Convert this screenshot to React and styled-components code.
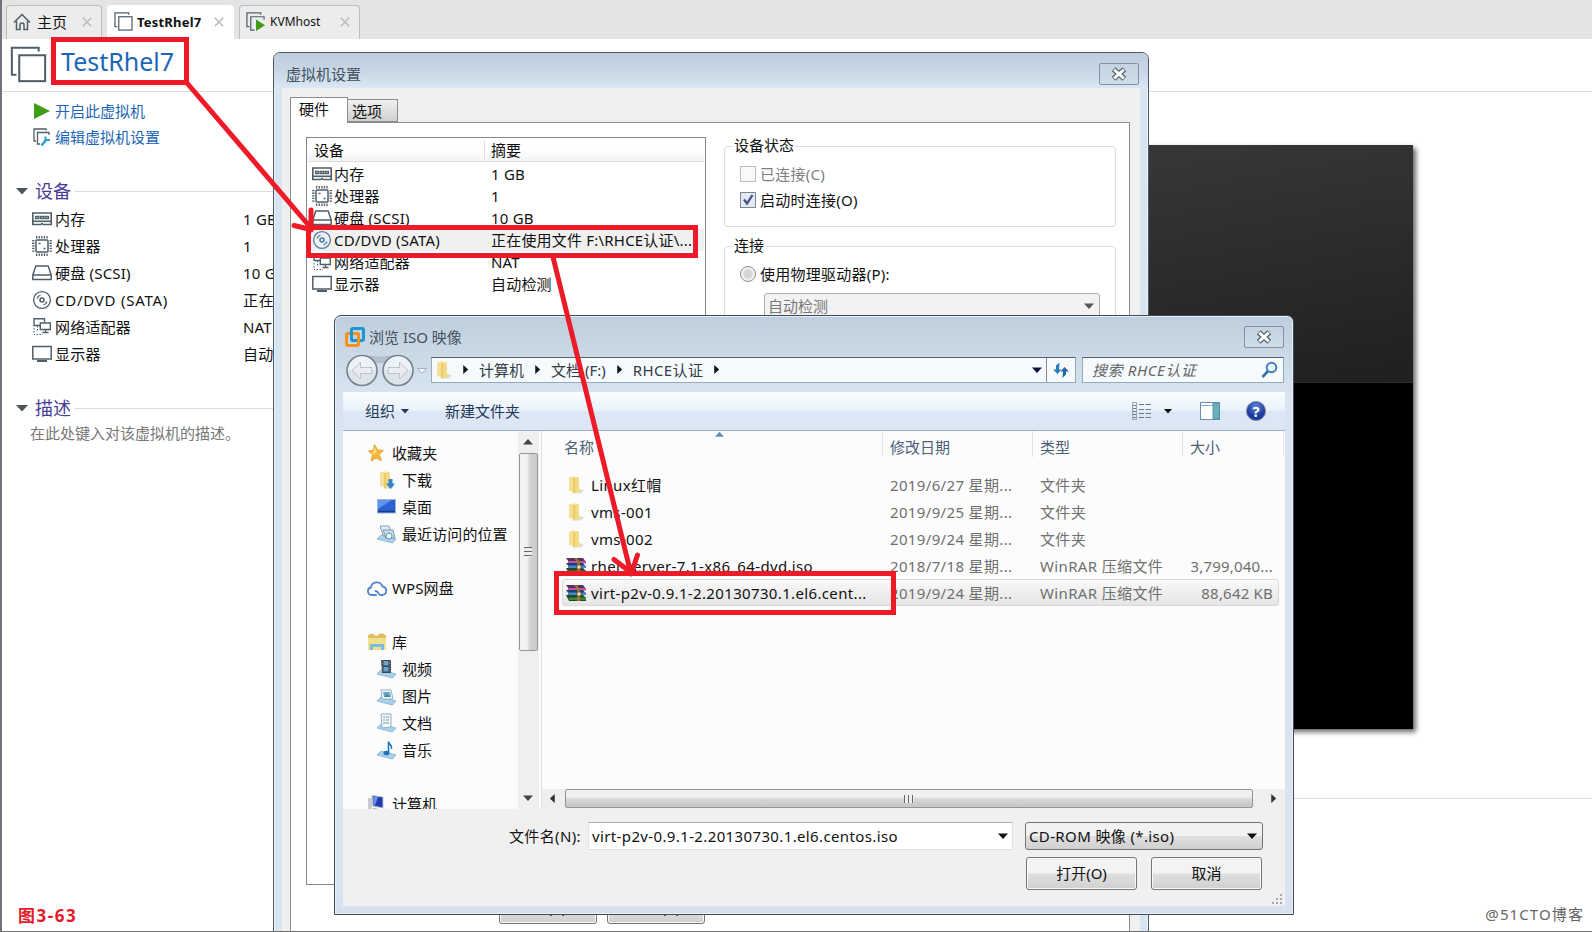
import React, { useState } from 'react'
import styled, { createGlobalStyle, css } from 'styled-components'

const ink = '#4f5f69'

const HomeIcon = () => (
  <svg width="18" height="18" viewBox="0 0 18 18" fill="none" stroke={ink} strokeWidth="1.5">
    <path d="M1 9.5 9 1.5l8 8" />
    <path d="M3.5 8v8.500h3.500v-4.500a2 2 0 0 1 4 0v4.500h3.500V8" />
  </svg>
)

const VmIcon = ({ size = 20, running, wide }) => (
  <svg width={size} height={size} viewBox="0 0 20 20" fill="none" stroke={ink} strokeWidth={wide ? 1.1 : 1.3}>
    <path d="M15.5 3V1H1v14.5h2.5" />
    {running ? <path d="M9 19H5V5h14v3" /> : <rect x="5" y="5" width="14" height="14" fill="#fff" />}
    {running && <path d="M10.500 8v12l9.500-6z" fill="#3f9c17" stroke="none" />}
  </svg>
)

const EditIcon = () => (
  <svg width="18" height="19" viewBox="0 0 18 19" fill="none" stroke={ink} strokeWidth="1.3">
    <path d="M13 2.500V1H1v12h2" />
    <path d="M16 7V4.500H4.500V16H7" />
    <path d="m8.500 17.500 5-6" stroke="#2ba0dc" strokeWidth="2.600" />
    <path d="M12.500 8.500v3.500h4.500" stroke="#2ba0dc" strokeWidth="2" />
  </svg>
)

const MemoryIcon = () => (
  <svg width="20" height="20" viewBox="0 0 20 20" fill="none" stroke={ink} strokeWidth="1.6">
    <path d="M.8 4h18.400v11.500h-8l-1.200-1-1.200 1h-8z" />
    <path d="M1 12.300h18" />
    <path d="M3.500 7.300h3.300v2.300H3.500zM8.400 7.300h3.300v2.300H8.400zM13.200 7.300h3.300v2.300h-3.300z" strokeWidth="1.2" fill="#a3adb3" />
  </svg>
)

const CpuIcon = () => (
  <svg width="20" height="20" viewBox="0 0 20 20" fill="none" stroke={ink}>
    <rect x="4" y="4" width="12" height="12" rx="1" strokeWidth="1.5" />
    <path d="M4 1.300h12M4 18.700h12M1.300 4v12M18.700 4v12" strokeWidth="2.400" strokeDasharray="1.300 1.300" />
    <path d="M6.500 7.500h2M11.500 12.500h2" strokeWidth="1.600" />
  </svg>
)

const DiskIcon = () => (
  <svg width="20" height="20" viewBox="0 0 20 20" fill="none" stroke={ink} strokeWidth="1.5" strokeLinejoin="round">
    <path d="M3.800 3h12.400L19.200 12H.8z" />
    <path d="M.8 12v4.500h18.400V12" />
  </svg>
)

const CdIcon = ({ color = ink }) => (
  <svg width="20" height="20" viewBox="0 0 20 20" fill="none" stroke={color} strokeWidth="1.3">
    <circle cx="10" cy="10" r="8.400" />
    <circle cx="10" cy="10" r="2" strokeWidth="1.600" />
    <path d="M5 8.500a5.500 5.500 0 0 1 3.500-3.500M15 11.500a5.500 5.500 0 0 1-3.500 3.500" />
  </svg>
)

const NetworkIcon = () => (
  <svg width="20" height="20" viewBox="0 0 20 20" fill="none" stroke={ink} strokeWidth="1.4">
    <path d="M8 8.500H2V1.700h10.500v3.500" />
    <path d="M8.300 6h10v6.500h-10zM13.500 12.500v3M10.500 15.500h6" />
    <path d="M2 11v6.500h9M5.500 9v5" strokeDasharray="1.500 1.500" strokeWidth="1" />
  </svg>
)

const DisplayIcon = () => (
  <svg width="20" height="20" viewBox="0 0 20 20" fill="none" stroke={ink} strokeWidth="1.5">
    <rect x=".8" y="2.500" width="18.400" height="12.500" />
    <path d="M5 17h10" strokeWidth="2" />
  </svg>
)

const CloseGlyph = () => (
  <svg width="16" height="14" viewBox="0 0 15 13">
    <path d="M2.500 2l10 9M12.500 2l-10 9" stroke="#4d5a66" strokeWidth="5" />
    <path d="M3 2.500l9 8M12 2.500l-9 8" stroke="#fff" strokeWidth="2.800" />
  </svg>
)

const VmwareLogo = () => (
  <svg width="20" height="20" viewBox="0 0 20 20" fill="none" strokeWidth="3">
    <rect x="6.500" y="1.500" width="12" height="12" rx="1.500" stroke="#1e96d2" />
    <rect x="1.500" y="6.500" width="12" height="12" rx="1.500" stroke="#f3921d" />
    <path d="M6.500 9V4M6.500 13.500H10" stroke="#1e96d2" />
  </svg>
)

const FolderIcon = ({ arrow }) => (
  <svg width="18" height="20" viewBox="0 0 18 20">
    <path d="M9 14l8 1-3 3.500H5z" fill="#d9dde0" />
    <path d="M2 2.500 8 1v16.500l-6-1.500z" fill="#f5e09a" />
    <path d="M6 3.500l5-1.500v14L6 18.500z" fill="#eccb68" />
    <path d="M8.500 3 12 2.500V14l3.500 1.500-7.500 3z" fill="#f3dc86" />
    {arrow && <path d="M10.500 9h4v4.500H17L12.500 19 8 13.500h2.500z" fill="#2f86cc" />}
  </svg>
)

const StarIcon = () => (
  <svg width="20" height="20" viewBox="0 0 20 20">
    <path d="m7.500 1.500 3 5.300 5.800.7-4 4 2.200 6.300-5.500-2.800-4.800 3 1.300-6.300L1.500 8l4.800-1z" fill="#fbb63e" stroke="#e9a23d" />
    <path d="m7.800 4 1.500 5-4.300 3z" fill="#ffe08a" />
  </svg>
)

const DesktopIcon = () => (
  <svg width="20" height="20" viewBox="0 0 20 20">
    <rect x=".5" y="2.500" width="18" height="13.500" fill="#2c62cf" stroke="#9fb6d8" />
    <path d="M1 3h14L1 12z" fill="#5c95ed" />
    <path d="M1 14.500h17" stroke="#173c8f" strokeWidth="1.500" />
  </svg>
)

const TrayIcon = ({ children }) => (
  <svg width="20" height="20" viewBox="0 0 20 20">
    <path d="M0 15l4-4 15 4-3.500 4z" fill="#a9d2ec" stroke="#6ea9ce" strokeWidth=".7" />
    {children}
  </svg>
)

const RecentIcon = () => (
  <TrayIcon>
    <path d="M3 2h9l3 9H6z" fill="#dce9ef" stroke="#8aa5b3" />
    <path d="M6 6h10l2 8H9z" fill="#c5dde8" stroke="#7c9aab" />
    <circle cx="12" cy="12" r="3" fill="#f3fafc" stroke="#6391ac" />
  </TrayIcon>
)

const VideoIcon = () => (
  <TrayIcon>
    <path d="M4 1h10v13H5z" fill="#39444d" />
    <path d="M6.500 2h5v4.500h-5zM6.500 8h5v4.500h-5z" fill="#67a6cf" />
    <path d="M5 1.500v12M13 1.500V14" stroke="#aeb9c0" strokeDasharray="1 1.500" />
  </TrayIcon>
)

const PictureIcon = () => (
  <TrayIcon>
    <path d="M4 4h10l2 9H5z" fill="#f3fafd" stroke="#8bb1c8" />
    <path d="M6 6h7l1 5H7z" fill="#6aa7c9" />
    <path d="M7 11l3-3 3.500 3z" fill="#4d8d7d" />
  </TrayIcon>
)

const DocumentIcon = () => (
  <TrayIcon>
    <path d="M4 1h10v13l-9 1z" fill="#f5f9fb" stroke="#90aebf" />
    <path d="M6 4h2M9 4h3M6 7h2M9 7h3M6 10h6" stroke="#6f97ad" />
  </TrayIcon>
)

const MusicIcon = () => (
  <TrayIcon>
    <path d="M11.500 13V1.500c0 3 4.500 3.500 3 7.500" fill="none" stroke="#2075b8" strokeWidth="1.600" />
    <ellipse cx="9.500" cy="13" rx="3" ry="2.300" fill="#2075b8" />
  </TrayIcon>
)

const CloudIcon = () => (
  <svg width="20" height="20" viewBox="0 0 20 20" fill="none" stroke="#5384d8" strokeWidth="1.800">
    <path d="M9 17H4.500a3.800 3.800 0 0 1-.6-7.500 6 6 0 0 1 11.600-1 4.300 4.300 0 0 1 .2 8.500h-2c-3 0-1.500-4-5.200-4" strokeLinecap="round" />
  </svg>
)

const LibraryIcon = () => (
  <svg width="20" height="20" viewBox="0 0 20 20">
    <path d="M1 3.500l3-2 3 1 1 1h3l1-2h4l3 2v14H1z" fill="#dcc05e" />
    <path d="M1 6h18v12H1z" fill="#f3e08c" />
    <path d="M3 18v-6h14v6h-3v-3H6v3z" fill="#78bde0" />
  </svg>
)

const ComputerIcon = () => (
  <svg width="20" height="20" viewBox="0 0 20 20">
    <path d="M1 4h4v11H1z" fill="#c6ccd0" />
    <path d="M5 1.500 16 3v11L6 12z" fill="#1f3bb0" stroke="#b8c3cf" />
    <path d="M6 2.500 11 3l-3 8.500-1.500-.3z" fill="#6e8fe6" />
    <path d="M6 15l9 1.500 3-1" stroke="#98a4ad" strokeWidth="2" fill="none" />
  </svg>
)

const RarIcon = () => (
  <svg width="20" height="18" viewBox="0 0 20 18">
    <path d="M0 1h17l3 4H3z" fill="#54315e" />
    <path d="M2 4h18v2.500H2z" fill="#c0559c" />
    <path d="M0 6h17l3 4H3z" fill="#1f3d7c" />
    <path d="M2 8.500h18V11H2z" fill="#4a86cb" />
    <path d="M0 11h17l3 3v3H3z" fill="#1c4c22" />
    <path d="M3 13.500h17V16H3z" fill="#3e8a3b" />
    <path d="M8 1h3l3 4v12h-3V5z" fill="#9c7440" />
    <path d="M11 8h4v4h-4z" fill="#efe3b4" stroke="#5c4624" strokeWidth=".8" />
  </svg>
)

const NavArrows = () => (
  <svg width="84" height="34" viewBox="0 0 84 34">
    <path d="M17 2c8-.5 10 1.500 18 1.500s10-2 18-1.500v8H17z" fill="#b3bfcc" />
    {[17, 53].map(cx => (
      <g key={cx}>
        <circle cx={cx} cy="17.500" r="15" fill="#dde4ec" stroke="#77828e" strokeWidth="1.600" />
        <path d={`M${cx - 13.500} 17a13.500 13.500 0 0 1 27 0z`} fill="#edf2f7" />
      </g>
    ))}
    <path d="M7 17.500l8.500-8v5H27v6H15.500v5z" fill="#e9edf2" stroke="#b9c2cc" />
    <path d="M63 17.500l-8.500-8v5H43v6h11.500v5z" fill="#e9edf2" stroke="#b9c2cc" />
    <path d="M72.500 15.500h9l-4.500 5z" fill="#f3f6fa" stroke="#a2b0c0" />
  </svg>
)

const RefreshIcon = () => (
  <svg width="18" height="18" viewBox="0 0 18 18" fill="#2b7ec0">
    <path d="M4 4.500 7.500 1.500 7 8.500H9.500L5.500 13 1 8.500h3z" />
    <path d="M14 13.500 10.500 17l.5-6.500H8.500L12.500 6 17 10.500h-3z" fill="#2467a4" />
  </svg>
)

const SearchIcon = () => (
  <svg width="17" height="18" viewBox="0 0 17 18" fill="none">
    <path d="M1.500 16l5.500-6" stroke="#3b6ea3" strokeWidth="2.600" />
    <circle cx="10.500" cy="6.500" r="4.800" fill="#eef6fd" stroke="#3f7fbd" strokeWidth="2" />
  </svg>
)

const ViewIcon = () => (
  <svg width="20" height="18" viewBox="0 0 20 18" stroke="#6b7b8d" fill="none">
    <path d="M1.500.500h4v17h-4z" stroke="#98a7b8" />
    <path d="M2 3.500h3M2 6.500h3M2 9.500h3M2 12.500h3M2 15.500h3" />
    <path d="M8 2.500h5M14.500 2.500H20M8 7.500h5M14.500 7.500H20M8 11.500h5M14.500 11.500H20M8 15.500h5M14.500 15.500H20" />
  </svg>
)

const PaneIcon = () => (
  <svg width="20" height="18" viewBox="0 0 20 18">
    <rect x=".5" y=".5" width="19" height="17" fill="#fff" stroke="#6b8fb5" />
    <path d="M1 3.500h12" stroke="#8ea9c6" />
    <rect x="13" y="1" width="6.500" height="16" fill="#69b0bd" stroke="#4c8b9c" strokeWidth=".8" />
  </svg>
)

const Triangle = ({ dir = 'down', size = 5, color = '#111' }) => {
  const turn = { down: 0, left: 90, up: 180, right: 270 }[dir]
  return (
    <svg width={size * 2} height={size * 2} viewBox="0 0 10 10">
      <path d="M0 2.500h10L5 8z" fill={color} transform={`rotate(${turn} 5 5)`} />
    </svg>
  )
}

const TabClose = () => (
  <svg width="10" height="10" viewBox="0 0 10 10" stroke="#bdbdbd" strokeWidth="1.600">
    <path d="M.8.8l8.400 8.400M9.200.8.8 9.200" />
  </svg>
)

const devices = [
  { name: '内存', value: '1 GB', Icon: MemoryIcon },
  { name: '处理器', value: '1', Icon: CpuIcon },
  { name: '硬盘 (SCSI)', value: '10 GB', Icon: DiskIcon },
  { name: 'CD/DVD (SATA)', value: '正在使用文件 F:\\RHCE认证\\...', Icon: CdIcon },
  { name: '网络适配器', value: 'NAT', Icon: NetworkIcon },
  { name: '显示器', value: '自动检测', Icon: DisplayIcon },
]

const places = [
  { name: '收藏夹', Icon: StarIcon },
  { name: '下载', Icon: () => <FolderIcon arrow />, sub: true },
  { name: '桌面', Icon: DesktopIcon, sub: true },
  { name: '最近访问的位置', Icon: RecentIcon, sub: true },
  null,
  { name: 'WPS网盘', Icon: CloudIcon },
  null,
  { name: '库', Icon: LibraryIcon },
  { name: '视频', Icon: VideoIcon, sub: true },
  { name: '图片', Icon: PictureIcon, sub: true },
  { name: '文档', Icon: DocumentIcon, sub: true },
  { name: '音乐', Icon: MusicIcon, sub: true },
  null,
  { name: '计算机', Icon: ComputerIcon },
]

const files = [
  { name: 'Linux红帽', date: '2019/6/27 星期...', type: '文件夹', size: '' },
  { name: 'vms-001', date: '2019/9/25 星期...', type: '文件夹', size: '' },
  { name: 'vms-002', date: '2019/9/24 星期...', type: '文件夹', size: '' },
  { name: 'rhel-server-7.1-x86_64-dvd.iso', date: '2018/7/18 星期...', type: 'WinRAR 压缩文件', size: '3,799,040...', rar: true },
  { name: 'virt-p2v-0.9.1-2.20130730.1.el6.cent...', date: '2019/9/24 星期...', type: 'WinRAR 压缩文件', size: '88,642 KB', rar: true },
]

const BrowseDialog = () => {
  const [selected, setSelected] = useState(4)

  return (
    <BrowseWindow>
      <BrowseTitle>
        <VmwareLogo />
        <span>浏览 ISO 映像</span>
        <CloseButton>
          <CloseGlyph />
        </CloseButton>
      </BrowseTitle>
      <NavRow>
        <NavArrows />
        <AddressBar>
          <FolderIcon />
          <Crumbs>
            <Triangle dir="right" size={4.5} />
            <span>计算机</span>
            <Triangle dir="right" size={4.5} />
            <span>文档 (F:)</span>
            <Triangle dir="right" size={4.5} />
            <span>RHCE认证</span>
            <Triangle dir="right" size={4.5} />
          </Crumbs>
          <Triangle color="#0c1240" />
          <Refresh>
            <RefreshIcon />
          </Refresh>
        </AddressBar>
        <SearchBox>
          <em>搜索 RHCE认证</em>
          <SearchIcon />
        </SearchBox>
      </NavRow>
      <Toolbar>
        <ToolText>
          组织 <Triangle size={4} color="#1e395b" />
        </ToolText>
        <ToolText>新建文件夹</ToolText>
        <ToolIcons>
          <ViewIcon />
          <Triangle size={4} />
          <PaneIcon />
          <Help>?</Help>
        </ToolIcons>
      </Toolbar>
      <Browser>
        <Places>
          {places.map((p, i) =>
            p ? (
              <Place key={i} $sub={p.sub}>
                <p.Icon />
                {p.name}
              </Place>
            ) : (
              <Place key={i} />
            )
          )}
        </Places>
        <VScroll>
          <Triangle dir="up" color="#444" />
          <VThumb>
            <VGrip />
          </VThumb>
          <Triangle color="#444" />
        </VScroll>
        <FilePane>
          <FileHead>
            <HeadCell>名称</HeadCell>
            <HeadCell>修改日期</HeadCell>
            <HeadCell>类型</HeadCell>
            <HeadCell>大小</HeadCell>
            <SortMark>
              <Triangle dir="up" size={4.5} color="#5f8fb4" />
            </SortMark>
          </FileHead>
          <FileRows>
            {files.map((f, i) => (
              <FileRow key={f.name} $selected={i === selected} onClick={() => setSelected(i)}>
                <FileName>
                  {f.rar ? <RarIcon /> : <FolderIcon />}
                  <span>{f.name}</span>
                </FileName>
                <span>{f.date}</span>
                <span>{f.type}</span>
                <FileSize>{f.size}</FileSize>
              </FileRow>
            ))}
          </FileRows>
          <HScroll>
            <Triangle dir="left" size={4.5} color="#333" />
            <HThumb>
              <HGrip />
            </HThumb>
            <Triangle dir="right" size={4.5} color="#333" />
          </HScroll>
        </FilePane>
      </Browser>
      <Footer>
        <FooterRow>
          <label>文件名(N):</label>
          <NameBox>
            virt-p2v-0.9.1-2.20130730.1.el6.centos.iso
            <Triangle />
          </NameBox>
          <TypeBox>
            CD-ROM 映像 (*.iso)
            <Triangle />
          </TypeBox>
        </FooterRow>
        <ButtonRow>
          <Button>打开(O)</Button>
          <Button>取消</Button>
        </ButtonRow>
        <Sizer>
          <svg width="12" height="12" viewBox="0 0 12 12" fill="#a8a8a8">
            <path d="M9 1h2v2H9zM5 5h2v2H5zM9 5h2v2H9zM1 9h2v2H1zM5 9h2v2H5zM9 9h2v2H9z" />
          </svg>
        </Sizer>
      </Footer>
    </BrowseWindow>
  )
}

const SettingsDialog = () => (
  <SettingsWindow>
    <SettingsTitle>
      <span>虚拟机设置</span>
      <CloseButton>
        <CloseGlyph />
      </CloseButton>
    </SettingsTitle>
    <SettingsBody>
      <SheetTabs>
        <SheetTab $active>硬件</SheetTab>
        <SheetTab>选项</SheetTab>
      </SheetTabs>
      <Sheet>
        <HardwareColumn>
          <HardwareList>
            <HardwareHead>
              <span>设备</span>
              <span>摘要</span>
            </HardwareHead>
            {devices.map(({ name, value, Icon }, i) => (
              <HardwareRow key={name} $selected={i === 3}>
                <Icon color={i === 3 ? '#4a7da8' : undefined} />
                <span>{name}</span>
                <span>{value}</span>
              </HardwareRow>
            ))}
          </HardwareList>
          <HardwareButtons>
            <Button>添加(A)...</Button>
            <Button>移除(R)</Button>
          </HardwareButtons>
        </HardwareColumn>
        <Options>
          <Group $height={81}>
            <legend>设备状态</legend>
            <Check $disabled>
              <Box $disabled />
              已连接(C)
            </Check>
            <Check>
              <Box>
                <svg width="12" height="12" viewBox="0 0 12 12" fill="none">
                  <path d="M2 5.500 5 9.500 10.500 1" stroke="#41508c" strokeWidth="2.200" />
                </svg>
              </Box>
              启动时连接(O)
            </Check>
          </Group>
          <Group $height={240}>
            <legend>连接</legend>
            <Check>
              <Radio />
              使用物理驱动器(P):
            </Check>
            <DriveSelect>
              自动检测
              <Triangle color="#555" />
            </DriveSelect>
          </Group>
        </Options>
      </Sheet>
    </SettingsBody>
  </SettingsWindow>
)

const App = () => (
  <Desktop>
    <GlobalStyle />
    <TabBar>
      <Tab $width={96} $gap={6}>
        <HomeIcon />
        <span>主页</span>
        <TabClose />
      </Tab>
      <Tab $width={127} $gap={4} $active>
        <VmIcon size={19} />
        <b>TestRhel7</b>
        <TabClose />
      </Tab>
      <Tab $width={121} $gap={5}>
        <VmIcon size={19} running />
        <small>KVMhost</small>
        <TabClose />
      </Tab>
    </TabBar>
    <Header>
      <VmIcon size={37} wide />
      <h1>TestRhel7</h1>
    </Header>
    <Main>
      <Side>
        <Action>
          <svg width="17" height="16" viewBox="0 0 17 16">
            <path d="M1 0v16l16-8z" fill="#3f9c17" />
          </svg>
          <span>开启此虚拟机</span>
        </Action>
        <Action>
          <EditIcon />
          编辑虚拟机设置
        </Action>
        <Section $top={28}>
          <Triangle size={6} color="#4c545c" />
          <h2>设备</h2>
        </Section>
        <DeviceRows>
          {devices.map(({ name, value, Icon }) => (
            <DeviceRow key={name} $loose={name.startsWith('CD')}>
              <Icon />
              <span>{name}</span>
              <span>{value}</span>
            </DeviceRow>
          ))}
        </DeviceRows>
        <Section $top={28}>
          <Triangle size={6} color="#4c545c" />
          <h2>描述</h2>
        </Section>
        <Note>在此处键入对该虚拟机的描述。</Note>
        <Figure>图3-63</Figure>
      </Side>
      <Preview>
        <Screen>
          <Gloss />
        </Screen>
        <Rule />
        <Mark>@51CTO博客</Mark>
      </Preview>
    </Main>
    <SettingsDialog />
    <BrowseDialog />
    <Annotations viewBox="0 0 1592 932">
      <rect x="53.500" y="39.500" width="133" height="43" />
      <rect x="308.500" y="227.500" width="387" height="28" />
      <rect x="556.500" y="573.500" width="337" height="39" />
      <path d="M187 83 311 228M311 210v20M294 225.500l17 4" />
      <path d="M553 257 631 574M614 559.500l17 13M637.500 555l-6 18" />
    </Annotations>
  </Desktop>
)

const GlobalStyle = createGlobalStyle`
  * {
    box-sizing: border-box;
  }
  body {
    margin: 0;
    background: #fff;
  }
  svg {
    flex: none;
    display: block;
  }
  h1, h2 {
    margin: 0;
    font-weight: 400;
  }
`

const Desktop = styled.div`
  position: relative;
  width: 1592px;
  height: 932px;
  overflow: hidden;
  display: flex;
  flex-direction: column;
  background: #fff;
  border-left: 2px solid #6f757b;
  border-bottom: 1px solid #6f6f6f;
  font-family: 'Noto Sans', 'Noto Sans CJK SC', sans-serif;
  font-size: 15px;
  line-height: 20px;
  color: #111;
  white-space: nowrap;
`

const TabBar = styled.div`
  height: 39px;
  flex: none;
  background: #e4e4e4;
  display: flex;
  align-items: flex-end;
  gap: 5px;
  padding-left: 4px;
`

const Tab = styled.div`
  width: ${({ $width }) => $width}px;
  height: 34px;
  display: flex;
  align-items: center;
  padding: 0 9px 2px 6px;
  gap: ${({ $gap }) => $gap}px;
  border: 1px solid ${({ $active }) => ($active ? '#fff' : '#bdbdbd')};
  border-bottom: 0;
  border-radius: 4px 4px 0 0;
  background: ${({ $active }) => ($active ? '#fff' : '#ececec')};

  b {
    font-size: 13px;
    letter-spacing: 0.2px;
  }
  small {
    font-size: 12px;
  }
  svg:last-child {
    margin-left: auto;
  }
`

const Header = styled.div`
  height: 53px;
  flex: none;
  display: flex;
  align-items: center;
  gap: 14px;
  padding: 0 0 1px 8px;
  border-bottom: 1px solid #dcdcdc;

  h1 {
    font-size: 25px;
    line-height: 40px;
    color: #1c66b8;
    padding-bottom: 8px;
  }
`

const Main = styled.div`
  flex: 1;
  display: flex;
`

const Side = styled.div`
  width: 836px;
  padding-top: 6px;
  display: flex;
  flex-direction: column;
`

const Action = styled.div`
  height: 26px;
  display: flex;
  align-items: center;
  gap: 4px;
  padding-left: 31px;
  color: #1c66b8;

  span {
    margin-left: 1px;
  }
`

const Section = styled.div`
  height: 26px;
  margin-top: ${({ $top }) => $top}px;
  padding-left: 14px;
  display: flex;
  align-items: center;

  h2 {
    margin-left: 7px;
    font-size: 18px;
    color: #483b96;
  }
  &::after {
    content: '';
    flex: 1;
    margin-left: 4px;
    border-top: 1px solid #dcdcdc;
  }
`

const DeviceRows = styled.div`
  padding: 1px 0 0 30px;
`

const DeviceRow = styled.div`
  height: 27px;
  display: grid;
  grid-template-columns: 23px 188px 1fr;
  align-items: center;
  letter-spacing: ${({ $loose }) => ($loose ? 0.75 : 0.2)}px;
`

const Note = styled.div`
  padding: 2px 0 0 28px;
  color: #777;
`

const Figure = styled.div`
  margin: auto 0 5px 16px;
  font-size: 17px;
  font-weight: 700;
  letter-spacing: 1.5px;
  color: #e6192a;
`

const Preview = styled.div`
  flex: 1;
  display: flex;
  flex-direction: column;
  padding-top: 53px;
`

const Screen = styled.div`
  width: 575px;
  height: 584px;
  background: #000;
  box-shadow: 3px 3px 5px rgba(0, 0, 0, 0.6);
`

const Gloss = styled.div`
  height: 238px;
  background: linear-gradient(170deg, #3c3c3c, #1f1f1f);
  border-bottom: 1px solid #2c2c2c;
`

const Rule = styled.div`
  margin-top: 69px;
  border-top: 1px solid #dcdcdc;
`

const Mark = styled.div`
  margin: auto 8px 7px auto;
  font-size: 15px;
  letter-spacing: 1.1px;
  color: #666;
`

const SettingsWindow = styled.div`
  position: absolute;
  left: 271px;
  top: 52px;
  width: 876px;
  height: 890px;
  display: flex;
  flex-direction: column;
  border: 1px solid #4b5a68;
  border-radius: 7px 7px 0 0;
  background: #d8e5f1;
  box-shadow: inset 0 0 0 1px #e8f0f8;
`

const SettingsTitle = styled.div`
  height: 35px;
  flex: none;
  display: flex;
  align-items: center;
  padding: 6px 9px 0 12px;
  background: linear-gradient(#bfcedc, #c6d4e3 45%, #dae7f4);
  border-radius: 6px 6px 0 0;
  color: #44525f;

  span {
    flex: 1;
  }
`

const CloseButton = styled.button`
  width: 40px;
  height: 22px;
  margin: 0 0 0 auto;
  padding: 0;
  display: flex;
  align-items: center;
  justify-content: center;
  background: linear-gradient(#c5d3e1, #cfdce9);
  border: 1px solid #8194a7;
  border-radius: 2px;
`

const SettingsBody = styled.div`
  flex: 1;
  margin: 0 8px;
  padding: 9px 10px 0 8px;
  display: flex;
  flex-direction: column;
  background: #f0f0f0;
`

const SheetTabs = styled.div`
  height: 25px;
  display: flex;
  align-items: flex-end;
  z-index: 1;
`

const SheetTab = styled.div`
  height: 23px;
  width: 50px;
  padding: 1px 0 0 4px;
  border: 1px solid #8c8c8c;
  border-left: 0;
  background: linear-gradient(#f1f1f1, #cfcfcf);

  ${({ $active }) =>
    $active &&
    css`
      height: 26px;
      width: 58px;
      margin-bottom: -1px;
      padding: 1px 0 0 8px;
      border-left: 1px solid #8c8c8c;
      border-bottom: 0;
      background: #fff;
    `}
`

const Sheet = styled.div`
  flex: 1;
  display: flex;
  padding: 14px 13px 0 15px;
  background: #fff;
  border: 1px solid #8c8c8c;
  border-bottom: 0;
`

const HardwareColumn = styled.div`
  width: 400px;
  margin-right: 18px;
`

const HardwareList = styled.div`
  height: 748px;
  border: 1px solid #828790;
  padding: 1px;
`

const HardwareHead = styled.div`
  height: 23px;
  margin-bottom: 1px;
  display: flex;
  align-items: center;
  background: linear-gradient(#fff 50%, #f2f3f4);
  border-bottom: 1px solid #dcdcdc;

  span {
    width: 176px;
    padding-left: 6px;
  }
  span + span {
    border-left: 1px solid #dedfe1;
    width: 214px;
  }
`

const HardwareRow = styled.div`
  height: 22px;
  display: grid;
  grid-template-columns: 22px 157px 1fr;
  align-items: center;
  padding-left: 4px;
  letter-spacing: 0.2px;
  background: ${({ $selected }) => ($selected ? '#f0f0f0' : 'none')};
`

const HardwareButtons = styled.div`
  display: flex;
  justify-content: flex-end;
  gap: 10px;
  padding: 6px 1px 0 0;

  button {
    width: 98px;
  }
`

const Button = styled.button`
  width: 111px;
  height: 33px;
  padding: 0 0 2px;
  font: inherit;
  color: #111;
  background: linear-gradient(#f3f3f3 48%, #dfdfdf 52%, #d0d0d0);
  border: 1px solid #757575;
  border-radius: 3px;
  box-shadow: inset 0 0 0 1px #fafafa;
`

const Options = styled.div`
  flex: 1;
  padding-top: 9px;
`

const Group = styled.div`
  height: ${({ $height }) => $height}px;
  margin-bottom: 19px;
  padding: 0 15px;
  border: 1px solid #dcdcdc;
  border-radius: 4px;

  legend {
    width: max-content;
    height: 20px;
    margin: -12px 0 6px -7px;
    padding: 0 1px;
    background: #fff;
  }
`

const Check = styled.div`
  height: 26px;
  display: flex;
  align-items: center;
  gap: 4px;
  letter-spacing: 0.25px;
  color: ${({ $disabled }) => ($disabled ? '#808080' : '#111')};
`

const Box = styled.span`
  width: 16px;
  height: 16px;
  display: flex;
  align-items: center;
  justify-content: center;
  border: 1px solid ${({ $disabled }) => ($disabled ? '#bcbcbc' : '#7e8a98')};
  background: ${({ $disabled }) => ($disabled ? '#f9f9f9' : '#e3e8f1')};
`

const Radio = styled.span`
  width: 16px;
  height: 16px;
  border: 1px solid #8a8a8a;
  border-radius: 50%;
  background: radial-gradient(#d6d6d6 40%, #f4f4f4 60%);
`

const DriveSelect = styled.div`
  width: 336px;
  height: 26px;
  margin: 6px 0 0 24px;
  padding: 0 5px 0 3px;
  display: flex;
  align-items: center;
  justify-content: space-between;
  background: #f2f2f2;
  border: 1px solid #adadad;
  border-radius: 3px;
  color: #777;
`

const BrowseWindow = styled.div`
  position: absolute;
  left: 332px;
  top: 315px;
  width: 960px;
  height: 600px;
  display: flex;
  flex-direction: column;
  padding-bottom: 8px;
  border: 1px solid #414c58;
  border-radius: 7px 7px 0 0;
  background: linear-gradient(#bfcedc, #d8e5f1 80px, #d8e5f1 570px, #d7e0f0);
  box-shadow: inset 0 0 0 1px #e6eef6;
`

const BrowseTitle = styled.div`
  height: 36px;
  flex: none;
  display: flex;
  align-items: center;
  gap: 4px;
  padding: 6px 9px 0 10px;
  color: #44525f;
`

const NavRow = styled.div`
  height: 40px;
  flex: none;
  display: flex;
  align-items: center;
  padding: 0 9px 4px 10px;
`

const field = css`
  height: 26px;
  display: flex;
  align-items: center;
  background: #f6fafd;
  border: 1px solid #9aa9b8;
  border-top-color: #55626f;
`

const AddressBar = styled.div`
  ${field}
  width: 645px;
  margin: 0 6px 0 2px;
  padding: 0 0 1px 3px;
`

const Crumbs = styled.div`
  flex: 1;
  display: flex;
  align-items: center;
  padding-left: 8px;
  color: #333c46;

  span {
    margin: 0 9px;
  }
  span:last-of-type {
    letter-spacing: 0.4px;
  }
`

const Refresh = styled.div`
  width: 29px;
  height: 24px;
  margin-left: 4px;
  display: flex;
  align-items: center;
  justify-content: center;
  border-left: 1px solid #7f8c99;
`

const SearchBox = styled.div`
  ${field}
  flex: 1;
  justify-content: space-between;
  padding: 0 5px 1px 9px;
  color: #666;
  letter-spacing: 0.6px;
`

const Toolbar = styled.div`
  height: 39px;
  flex: none;
  margin: 0 8px;
  padding: 0 19px 0 22px;
  display: flex;
  align-items: center;
  gap: 36px;
  color: #1e395b;
  background: linear-gradient(#fbfdff, #eaf1fa 48%, #dce6f4 52%, #dde7f4);
  border-bottom: 1px solid #a0afc8;
`

const ToolText = styled.div`
  display: flex;
  align-items: center;
  gap: 6px;
`

const ToolIcons = styled.div`
  margin-left: auto;
  display: flex;
  align-items: center;

  svg + svg {
    margin-left: 13px;
  }
  svg + svg + svg {
    margin: 0 26px 0 28px;
  }
`

const Help = styled.span`
  width: 20px;
  height: 20px;
  border-radius: 50%;
  background: radial-gradient(circle at 50% 25%, #5d86dc, #1b3a9c 60%);
  border: 1px solid #6f7fa8;
  color: #fff;
  font-size: 15px;
  font-weight: 700;
  line-height: 18px;
  text-align: center;
`

const Browser = styled.div`
  height: 378px;
  flex: none;
  margin: 0 8px;
  display: flex;
  overflow: hidden;
  background: #fcfcfc;
`

const Places = styled.div`
  width: 176px;
  padding-top: 8px;
  overflow: hidden;
`

const Place = styled.div`
  height: 27px;
  display: flex;
  align-items: center;
  gap: 5px;
  padding-left: ${({ $sub }) => ($sub ? 34 : 24)}px;
  letter-spacing: 0.1px;

  svg {
    width: 20px;
  }
`

const VScroll = styled.div`
  width: 21px;
  height: 378px;
  display: flex;
  flex-direction: column;
  align-items: center;
  justify-content: space-between;
  padding: 6px 1px 6px 0;
  background: #efefef;
`

const VThumb = styled.div`
  width: 19px;
  height: 198px;
  margin-bottom: 137px;
  display: flex;
  align-items: center;
  justify-content: center;
  background: linear-gradient(90deg, #f3f3f3 40%, #d2d2d2 60%, #cacaca);
  border: 1px solid #959595;
  border-radius: 2px;
`

const VGrip = styled.div`
  width: 8px;
  height: 10px;
  background: repeating-linear-gradient(#666 0 1px, #eee 1px 4px);
`

const FilePane = styled.div`
  flex: 1;
  margin-left: 2px;
  border-left: 1px solid #e2e2e2;
  display: flex;
  flex-direction: column;
`

const FileHead = styled.div`
  position: relative;
  height: 26px;
  display: grid;
  grid-template-columns: 341px 150px 150px 101px 1px;
`

const HeadCell = styled.div`
  padding: 6px 0 0 7px;
  border-right: 1px solid #e0e4ea;
  color: #4c607a;

  &:first-child {
    padding-left: 22px;
  }
`

const SortMark = styled.div`
  position: absolute;
  left: 173px;
  top: -1px;
`

const FileRows = styled.div`
  flex: 1;
  padding: 14px 6px 0 20px;
`

const FileRow = styled.div`
  height: 27px;
  display: grid;
  grid-template-columns: 327px 150px 150px 83px;
  align-items: center;
  color: #707070;
  letter-spacing: 0.35px;
  border: 1px solid transparent;
  border-radius: 3px;

  ${({ $selected }) =>
    $selected &&
    css`
      border-color: #d9d9d9;
      background: linear-gradient(#f9f9f9, #e5e5e5);
    `}
`

const FileName = styled.div`
  display: flex;
  align-items: center;
  padding-left: 3px;
  gap: 5px;
  color: #111;

  svg {
    width: 20px;
  }
`

const FileSize = styled.span`
  text-align: right;
  letter-spacing: 0.2px;
`

const HScroll = styled.div`
  height: 20px;
  display: flex;
  align-items: center;
  justify-content: space-between;
  padding: 0 7px 1px 6px;
  background: #efefef;
`

const HThumb = styled.div`
  width: 688px;
  height: 19px;
  margin-right: 9px;
  display: flex;
  align-items: center;
  justify-content: center;
  background: linear-gradient(#f0f0f0 40%, #d6d6d6 55%, #c6c6c6);
  border: 1px solid #959595;
  border-radius: 2px;
`

const HGrip = styled.div`
  width: 10px;
  height: 8px;
  background: repeating-linear-gradient(90deg, #666 0 1px, #eee 1px 4px);
`

const Footer = styled.div`
  position: relative;
  flex: 1;
  margin: 0 8px;
  padding: 13px 22px 0 0;
  background: #f0f0f0;
`

const FooterRow = styled.div`
  display: flex;
  justify-content: flex-end;
  align-items: center;
  letter-spacing: 0.37px;
`

const NameBox = styled.div`
  width: 425px;
  height: 28px;
  margin: 0 12px 0 7px;
  padding: 0 4px 0 3px;
  display: flex;
  align-items: center;
  justify-content: space-between;
  background: #fff;
  border: 1px solid #e2e3ea;
  border-top-color: #abadb3;
`

const TypeBox = styled.div`
  width: 238px;
  height: 28px;
  padding: 0 5px 0 3px;
  display: flex;
  align-items: center;
  justify-content: space-between;
  background: linear-gradient(#f2f2f2 48%, #dfdfdf 52%, #d0d0d0);
  border: 1px solid #757575;
  border-radius: 3px;
`

const ButtonRow = styled.div`
  display: flex;
  justify-content: flex-end;
  gap: 14px;
  padding: 7px 1px 0 0;
`

const Sizer = styled.div`
  position: absolute;
  right: 2px;
  bottom: 1px;
`

const Annotations = styled.svg`
  position: absolute;
  left: -2px;
  top: 0;
  width: 1592px;
  height: 932px;
  fill: none;
  stroke: #ed1a28;
  stroke-width: 5;
  pointer-events: none;

  path {
    stroke-linecap: round;
  }
`

export default App
